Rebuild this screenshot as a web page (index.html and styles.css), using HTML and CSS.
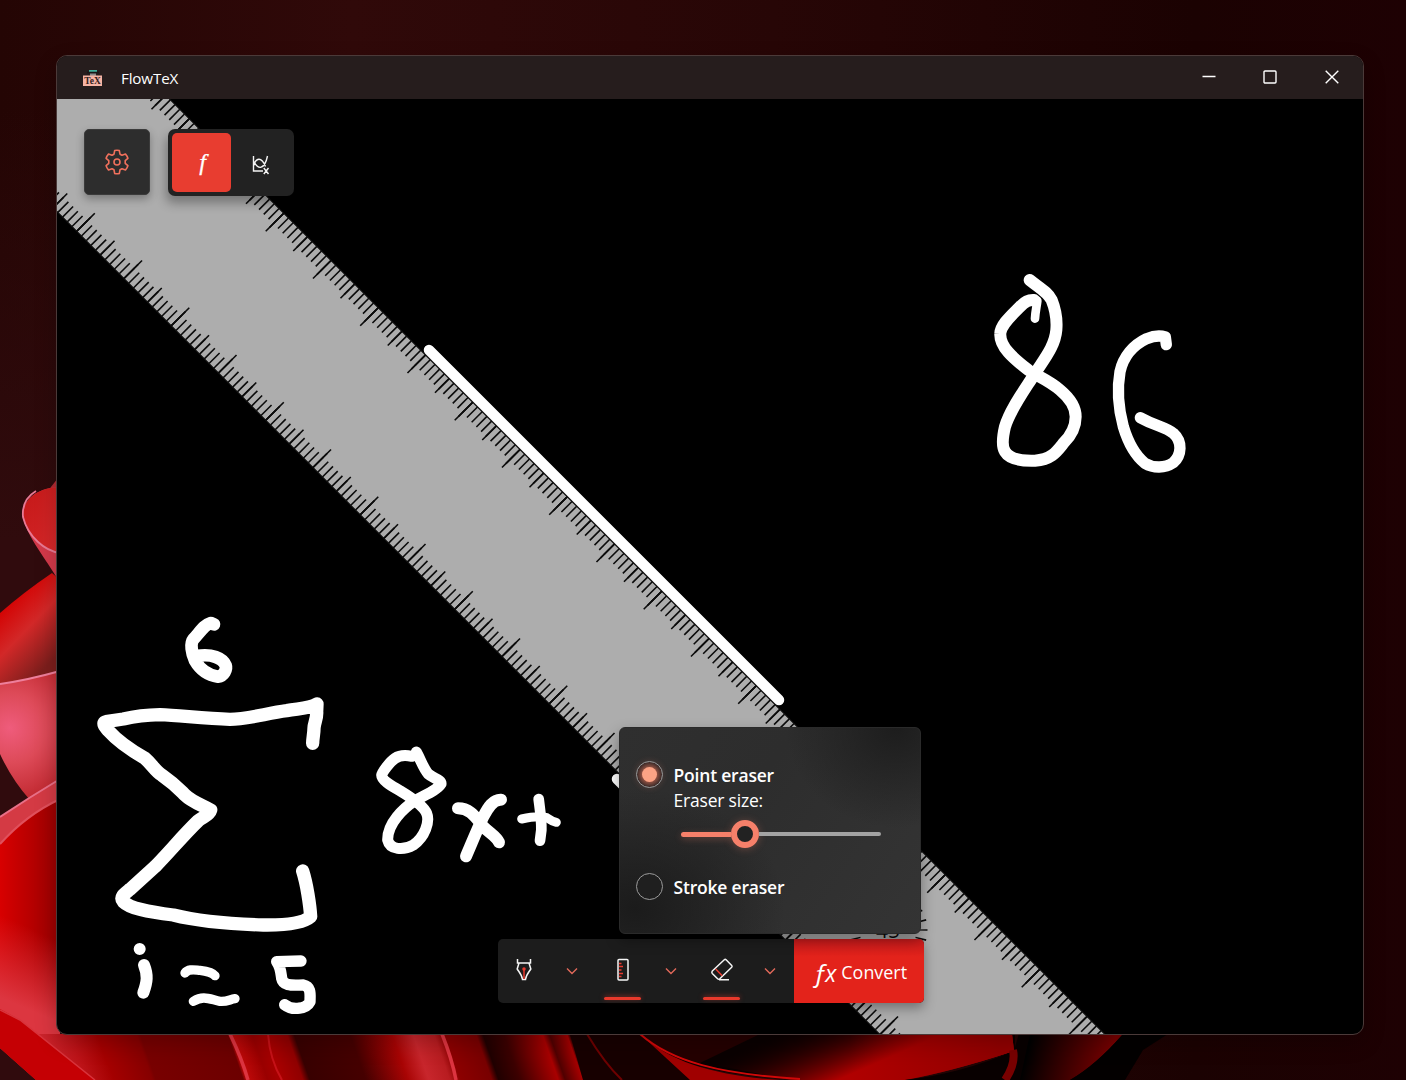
FILE: index.html
```html
<!DOCTYPE html>
<html lang="en">
<head>
<meta charset="utf-8">
<title>FlowTeX</title>
<link rel="stylesheet" href="styles.css">
</head>
<body>
<svg class="wallpaper" viewBox="0 0 1406 1080" aria-hidden="true">
  <defs>
    <linearGradient id="base" x1="0" y1="0" x2="1" y2="0"><stop offset="0" stop-color="#240504"/><stop offset=".25" stop-color="#300909"/><stop offset=".55" stop-color="#270606"/><stop offset=".85" stop-color="#1b0202"/><stop offset="1" stop-color="#1e0103"/></linearGradient>
    <linearGradient id="low" x1="0" y1="0" x2="0" y2="1"><stop offset=".1" stop-color="#300b0d" stop-opacity="0"/><stop offset=".5" stop-color="#300b0d"/></linearGradient>
    <linearGradient id="curl" x1="0" y1="0" x2="1" y2="1"><stop offset="0" stop-color="#c41717"/><stop offset="1" stop-color="#d82a2c"/></linearGradient>
    <linearGradient id="petalB" x1="10" y1="600" x2="62" y2="650" gradientUnits="userSpaceOnUse"><stop offset="0" stop-color="#d40202"/><stop offset=".45" stop-color="#d22828"/><stop offset="1" stop-color="#7c1e1c"/></linearGradient>
    <radialGradient id="petalC" cx="10" cy="728" r="70" gradientUnits="userSpaceOnUse"><stop offset="0" stop-color="#ef5c7c"/><stop offset=".5" stop-color="#dd4a58"/><stop offset="1" stop-color="#c42c34"/></radialGradient>
    <linearGradient id="petalD" x1="0" y1="0" x2="60" y2="0" gradientUnits="userSpaceOnUse"><stop offset="0" stop-color="#d80000"/><stop offset="1" stop-color="#980000"/></linearGradient>
    <linearGradient id="sheen" x1="36" y1="930" x2="6" y2="1000" gradientUnits="userSpaceOnUse"><stop offset="0" stop-color="#d9323c" stop-opacity="0"/><stop offset="1" stop-color="#dc3640"/></linearGradient>
    <linearGradient id="floor" x1="0" y1="1034" x2="624.400" y2="817" gradientUnits="userSpaceOnUse">
      <stop offset=".03" stop-color="#d4303a"/><stop offset=".1" stop-color="#bd1318"/><stop offset=".14" stop-color="#a40000"/><stop offset=".195" stop-color="#860000"/><stop offset=".2" stop-color="#780000"/><stop offset=".325" stop-color="#6c0000"/><stop offset=".33" stop-color="#c00a0a"/><stop offset=".36" stop-color="#9a0000"/><stop offset=".38" stop-color="#a80000"/><stop offset=".41" stop-color="#900000"/><stop offset=".42" stop-color="#380000"/><stop offset=".5" stop-color="#450000"/><stop offset=".56" stop-color="#a80404"/><stop offset=".59" stop-color="#c8262c"/><stop offset=".62" stop-color="#b81c20"/><stop offset=".635" stop-color="#8c0000"/><stop offset=".68" stop-color="#780000"/><stop offset=".69" stop-color="#200000"/><stop offset=".72" stop-color="#3c0000"/><stop offset=".775" stop-color="#a80000"/><stop offset=".785" stop-color="#500000"/><stop offset=".81" stop-color="#a40000"/><stop offset=".815" stop-color="#180000"/><stop offset="1" stop-color="#1a0000"/>
    </linearGradient>
    <linearGradient id="bowl" x1="740" y1="1030" x2="800" y2="1090" gradientUnits="userSpaceOnUse"><stop offset="0" stop-color="#040000"/><stop offset=".55" stop-color="#6c0000"/><stop offset="1" stop-color="#b00000"/></linearGradient>
    <linearGradient id="bowlR" x1="780" y1="1010" x2="815" y2="1090" gradientUnits="userSpaceOnUse"><stop offset=".25" stop-color="#1c0000" stop-opacity="0"/><stop offset="1" stop-color="#b00000"/></linearGradient>
    <linearGradient id="tip" x1="850" y1="0" x2="1000" y2="0" gradientUnits="userSpaceOnUse"><stop offset="0" stop-color="#900000" stop-opacity="0"/><stop offset="1" stop-color="#900000"/></linearGradient>
    <linearGradient id="leaf" x1="1030" y1="1040" x2="1110" y2="1060" gradientUnits="userSpaceOnUse"><stop offset="0" stop-color="#000"/><stop offset="1" stop-color="#780000"/></linearGradient>
  </defs>
  <rect width="1406" height="1080" fill="url(#base)"/>
  <rect width="120" height="1080" fill="url(#low)"/>
  <path d="M47 492 58 478V500z" fill="#b32a32"/>
  <path d="M60 487C36 488 22 500 23 517c4 20 22 40 37 66z" fill="#d3394a"/>
  <path d="M60 487C36 488 22 500 23 517c5 20 22 34 37 36z" fill="url(#curl)"/>
  <path d="M36 491C26 497 22 506 23 517c5 20 22 34 37 36" fill="none" stroke="#e87a95" stroke-width="1.800"/>
  <path d="M0 613Q24 592 52 573L60 580V690H0z" fill="url(#petalB)"/>
  <path d="M0 684Q28 680 60 671V800H30Q12 780 0 754z" fill="url(#petalC)"/>
  <path d="M0 684Q28 680 60 671" fill="none" stroke="#ee7f9c" stroke-width="2"/>
  <path d="M0 817Q30 797 60 779V1080H36L0 1048z" fill="#d43a44"/>
  <path d="M0 817Q30 797 60 779" fill="none" stroke="#e87088" stroke-width="2"/>
  <path d="M0 844Q26 815 60 799V1080H36L0 1048z" fill="url(#petalD)"/>
  <path d="M0 844Q26 815 60 799" fill="none" stroke="#e0505c" stroke-width="2"/>
  <path d="M0 900 60 920V1060L0 1010z" fill="url(#sheen)"/>
  <path d="M18 1034H640L700 1080H92z" fill="url(#floor)"/>
  <path d="M0 1009 20 1020 95 1080H36L0 1048z" fill="#c50004"/>
  <path d="M0 1010 20 1020 95 1080" fill="none" stroke="#d8333c" stroke-width="1.500"/>
  <path d="M230 1034q12 25 18 46M442 1034q10 25 14 46" fill="none" stroke="#dc3440" stroke-width="3.500"/>
  <path d="M268 1034q2 26 14 46" fill="none" stroke="#c61218" stroke-width="2"/>
  <path d="M570 1034h70c24 20 44 26 60 29v17H583z" fill="#170000"/>
  <path d="M587 1034q18 30 35 46" fill="none" stroke="#6e0000" stroke-width="2"/>
  <path d="M640 1034H1015V1052L905 1080H800C700 1074 665 1058 640 1034z" fill="#0a0000"/>
  <path d="M640 1034H760L700 1063C680 1058 662 1050 640 1034z" fill="#240000"/>
  <path d="M740 1034H1012L1014 1051Q950 1072 905 1080H790L705 1063z" fill="url(#bowlR)"/>
  <path d="M850 1034H1012L1014 1051Q950 1072 905 1080H850z" fill="url(#tip)"/>
  <path d="M640 1034C672 1064 720 1076 780 1080H690z" fill="#a00000"/>
  <path d="M640 1034C672 1062 720 1074 800 1079" fill="none" stroke="#d00808" stroke-width="2"/>
  <path d="M1014 1051Q960 1074 905 1080H1100L1165 1030H1020z" fill="#080000"/>
  <path d="M1013 1050q3 14-8 30" fill="none" stroke="#780000" stroke-width="8"/>
  <path d="M1030 1034H1123Q1096 1065 1070 1080H1020z" fill="url(#leaf)"/>
  <path d="M1123 1034Q1096 1065 1070 1080H1125L1143 1050 1168 1034z" fill="#030000"/>
</svg>

<main class="window">
  <header class="titlebar">
    <svg class="app-icon" viewBox="0 0 22 20">
      <rect x="7" y="2" width="8" height="2" fill="#3fae9a"/><path d="M5 4.500h12" stroke="#171717" stroke-width="1.500"/>
      <rect x="8" y="5.500" width="6" height="4" fill="#8a8a8a"/>
      <rect x="1" y="7.500" width="19" height="10.500" fill="#f6b4a4"/>
      <text x="10.500" y="16.300" text-anchor="middle" class="app-icon-text">TeX</text>
    </svg>
    <h1 class="title">FlowTeX</h1>
    <div class="captions">
      <svg viewBox="0 0 16 16"><path d="M1.500 7.500h13"/></svg>
      <svg viewBox="0 0 16 16"><rect x="2" y="2" width="12" height="12" rx="1"/></svg>
      <svg viewBox="0 0 16 16"><path d="M1.700 1.700 14.300 14.300M14.300 1.700 1.700 14.300"/></svg>
    </div>
  </header>

  <section class="canvas">
    <svg class="ink" viewBox="57 99 1306 935">
      <!-- ruler, drawn along its own axis -->
      <g transform="rotate(45)">
        <rect x="-100" y="-49.850" width="1800" height="159.100" fill="#adadad"/>
        <g stroke="#0c0c0c">
          <path d="M-100-49.850H1700M-100 109.250H1700" stroke-width="1"/>
          <g stroke-dasharray="1.600 5.082">
            <path d="M16.540-42.400H1700M16.540 101.800H1700" stroke-width="14.900"/>
          </g>
          <g stroke-dasharray="1.600 31.810">
            <path d="M16.540-39.850H1700M16.540 99.250H1700" stroke-width="20"/>
          </g>
          <g stroke-dasharray="1.600 65.220">
            <path d="M16.540-37.100H1700M16.540 96.500H1700" stroke-width="25.500"/>
          </g>
        </g>
      </g>
      <circle cx="888" cy="930" r="34" pathLength="240" fill="none" stroke="#0c0c0c" stroke-width="11" stroke-dasharray="1.700 8.300" stroke-dashoffset=".85"/>
      <text x="888" y="938" text-anchor="middle" class="angle">45</text>
      <path d="M429 350 779 700M617 779 672 834" class="stroke" stroke-width="10.500"/>

      <g class="stroke" transform="translate(960 250) scale(.33333)" stroke-width="36">
        <path d="M209 90C240 115 262 125 275 150 285 175 292 205 289 240 285 290 250 330 222 375 190 425 150 480 135 530 128 560 125 590 135 605 150 630 195 633 225 632 275 628 290 605 310 580 335 555 347 525 347 500 347 470 330 445 300 420 265 390 230 378 205 360 160 325 118 290 121 250 122 225 150 200 180 170 195 155 205 149 222 150"/>
        <path d="M232 152C230 170 226 185 225 206" stroke-width="26"/>
        <path d="M619 284 616 261C600 256 580 258 560 266 520 285 490 320 480 365 472 410 474 470 490 530 505 580 530 620 555 640 580 655 615 655 640 638 665 615 668 575 640 550 615 530 590 530 541 503" stroke-width="34"/>
      </g>
      <g class="stroke" transform="translate(80 600) scale(.33333)" stroke-width="36">
        <path d="M402 73 392 69C374 74 360 96 340 118 330 130 335 160 345 182 360 208 385 226 414 230 432 228 441 208 437 196 428 174 395 160 350 168" stroke-width="38"/>
        <path d="M698 430C698 415 702 400 702 385 702 370 712 355 710 335L711 312C690 325 660 325 620 332 560 340 500 358 450 358 370 356 300 346 240 344 190 345 160 350 130 357L78 365C65 368 75 380 85 392 110 420 160 455 195 475 215 492 225 512 245 525 285 553 295 565 315 585 335 605 365 615 392 630 388 645 370 650 355 662 310 705 265 760 225 800L150 868C135 880 118 890 130 905 150 925 200 935 280 945 360 965 450 972 550 975 620 976 670 970 692 950 690 915 680 850 668 813" stroke-width="40"/>
        <path d="M179 1047h.1M192 1095C204 1125 202 1145 190 1178"/>
        <path d="M315 1119C325 1105 345 1110 360 1111 380 1113 400 1120 405 1127M340 1204C370 1185 390 1198 420 1204 440 1206 450 1198 465 1196" stroke-width="28"/>
        <path d="M663 1083 590 1085C602 1100 603 1120 605 1135 610 1160 640 1155 670 1155 695 1160 690 1185 690 1205 680 1225 640 1234 614 1214" stroke-width="34"/>
      </g>
      <g class="stroke" transform="translate(350 730) scale(.33333)" stroke-width="33">
        <path d="M199 66C215 95 220 115 235 132 250 145 275 150 273 162 262 180 225 195 195 212 160 235 112 280 113 330 120 360 160 362 190 345 225 320 240 275 230 250 220 225 180 200 150 182 120 165 95 150 95 135 95 128 120 95 135 85 150 75 165 75 185 79"/>
        <path d="M324 235C360 235 375 260 400 290 420 310 440 320 447 337M453 209C430 208 415 230 400 260 385 290 365 340 348 379" stroke-width="36"/>
        <path d="M515 267C545 260 570 257 590 263 600 270 610 275 619 277" stroke-width="27"/><path d="M566 207C570 240 575 270 574 300L570 332" stroke-width="32"/>
      </g>
    </svg>

    <div class="overlay">
      <nav class="top-tools">
        <button class="settings" aria-label="Settings">
          <svg width="26" height="26" viewBox="0 0 26 26" fill="none" stroke="#f0705c" stroke-width="1.600" stroke-linejoin="round"><circle cx="13" cy="13" r="3"/><path d="M10.700 1.500Q13 .9 15.300 1.500L16 5.200 18 6.300 21.500 5.100Q23.200 7 23.900 9.300L21.200 11.700V14.300L23.900 16.700Q23.200 19 21.500 20.900L18 19.700 16 20.800 15.300 24.500Q13 25.100 10.700 24.500L10 20.800 8 19.700 4.500 20.900Q2.800 19 2.100 16.700L4.800 14.300V11.700L2.100 9.300Q2.800 7 4.500 5.100L8 6.300 10 5.200z"/></svg>
        </button>
        <div class="modes">
          <button class="mode selected"><span>f</span></button>
          <button class="mode" aria-label="Graph">
            <svg width="18" height="20" viewBox="0 0 18 20" fill="none" stroke="#f4f4f4" stroke-width="1.400"><path d="M1.500 1V16H11M1.500 11C4 2.500 9.500 1.500 13.500 11.500M2 6.500C6 15 12.500 15 15.500 1M11.800 13 16.500 19M16.500 13 11.800 19"/></svg>
          </button>
        </div>
      </nav>

      <div class="dock">
        <div class="tools">
          <div class="tool">
            <button class="pick" aria-label="Pen"><svg width="20" height="26" viewBox="0 0 20 26" fill="none" stroke="#f5f5f5" stroke-width="1.500"><path d="M3.500 2V6H16.500V2M5 6 3.200 12C5 15 8 18 8.500 22.500H11.500C12 18 15 15 16.800 12L15 6"/><path d="M10 12.500V22" stroke="#ec3a2e" stroke-width="1.500"/><circle cx="10" cy="12" r="1" fill="#ec3a2e" stroke="#ec3a2e"/></svg></button>
            <button class="more" aria-label="Pen options"><svg width="12" height="8" viewBox="0 0 12 8"><path d="M1 1.500 6 6.500 11 1.500"/></svg></button>
          </div>
          <div class="tool active">
            <button class="pick" aria-label="Ruler"><svg width="20" height="26" viewBox="0 0 20 26" fill="none" stroke="#f5f5f5" stroke-width="1.500"><rect x="5" y="2.500" width="10" height="20.500" rx="1"/><path d="M6 6.500h2.500M6 9.500h4M6 13h2.500M6 16.500h4M6 19.500h2.500" stroke="#ec3a2e" stroke-width="1.300"/></svg></button>
            <button class="more" aria-label="Ruler options"><svg width="12" height="8" viewBox="0 0 12 8"><path d="M1 1.500 6 6.500 11 1.500"/></svg></button>
          </div>
          <div class="tool active">
            <button class="pick" aria-label="Eraser"><svg width="24" height="26" viewBox="0 0 24 26" fill="none" stroke="#f5f5f5" stroke-width="1.500" stroke-linejoin="round"><path d="M2.300 14 14.300 2.800Q15.200 2 16.100 2.800L21.700 8.500Q22.500 9.300 21.700 10.200L9.800 21.800Q8.700 22.800 7.600 21.800L2.300 16.500Q1.300 15.200 2.300 14zM9 22.800H19"/><path d="M5.700 12 12.200 18.700" stroke="#ec3a2e"/></svg></button>
            <button class="more" aria-label="Eraser options"><svg width="12" height="8" viewBox="0 0 12 8"><path d="M1 1.500 6 6.500 11 1.500"/></svg></button>
          </div>
        </div>
        <button class="convert"><span class="fx"><i>ƒ</i><b>x</b></span><span>Convert</span></button>

        <div class="flyout">
          <div class="option">
            <span class="radio checked"></span>
            <div class="option-body">
              <strong>Point eraser</strong>
              <span class="label">Eraser size:</span>
              <div class="slider"><span class="fill"></span><span class="thumb"></span><span class="rest"></span></div>
            </div>
          </div>
          <div class="option">
            <span class="radio"></span>
            <div class="option-body"><strong>Stroke eraser</strong></div>
          </div>
        </div>
      </div>
    </div>
  </section>
</main>
</body>
</html>
```
FILE: styles.css
```css
* { box-sizing: border-box; }

body {
  margin: 0;
  width: 1406px;
  height: 1080px;
  overflow: hidden;
  padding: 55px 42px 45px 56px;
  background: #240504;
  color: #fff;
  font-family: "Open Sans", "Noto Sans", sans-serif;
}

button {
  margin: 0;
  padding: 0;
  border: 0;
  background: none;
  color: inherit;
  font: inherit;
  display: flex;
  align-items: center;
  justify-content: center;
}

.wallpaper { position: absolute; inset: 0; width: 1406px; height: 1080px; z-index: -1; }

.window {
  display: flex;
  flex-direction: column;
  height: 980px;
  border: 1px solid #4b3a39;
  border-radius: 11px;
  overflow: hidden;
  background: #000;
  box-shadow: 0 8px 22px rgba(0, 0, 0, .2);
}

.titlebar {
  display: flex;
  align-items: center;
  flex: 0 0 43px;
  padding: 0 23.5px 1px 25px;
  background: #261d1d;
}
.app-icon { width: 22px; height: 20px; margin-top: 2px; }
.app-icon-text { font: bold 9.5px "Liberation Serif", serif; fill: #33201d; }
.title { margin: 1px 0 0 17px; font-size: 15.2px; font-weight: 400; letter-spacing: -.15px; }
.captions { display: flex; gap: 45.5px; margin-left: auto; }
.captions svg { width: 16px; height: 16px; fill: none; stroke: #fff; stroke-width: 1.4; }

.canvas { display: grid; flex: 1; min-height: 0; }
.ink, .overlay { grid-area: 1 / 1; }
.ink { width: 1306px; height: 935px; }
.stroke { fill: none; stroke: #fff; stroke-linecap: round; stroke-linejoin: round; }
.angle { font: 21px "Open Sans", sans-serif; fill: #0c0c0c; }

.overlay {
  display: flex;
  flex-direction: column;
  justify-content: space-between;
  height: 935px;
  padding: 30px 27px 31px;
}
.top-tools { display: flex; gap: 18px; }
.settings {
  width: 66px;
  height: 66px;
  border: 1px solid #3b3b3b;
  border-radius: 5px;
  background: #2d2d2d;
  box-shadow: 0 4px 9px rgba(0, 0, 0, .3);
}
.modes {
  display: flex;
  width: 126px;
  height: 67px;
  padding: 4px;
  border-radius: 7px;
  background: #222;
  box-shadow: -2px 7px 11px rgba(0, 0, 0, .32);
}
.mode { width: 59px; height: 59px; border-radius: 5px; }
.mode svg { margin-top: 4px; }
.selected { background: #e83d30; font: italic 24px "Liberation Serif", serif; -webkit-text-stroke: .3px #fff; padding-left: 2px; }

.dock {
  position: relative;
  display: flex;
  align-self: center;
  width: 426px;
  height: 64px;
  margin-left: 1px;
  border-radius: 5px;
  background: #1c1c1c;
  box-shadow: 0 5px 12px rgba(0, 0, 0, .35);
}
.tools { display: flex; width: 296px; }
.tool { display: flex; flex: 0 0 99px; }
.pick { position: relative; width: 52px; height: 64px; padding-bottom: 3px; }
.active .pick::after {
  content: "";
  position: absolute;
  left: 7.5px;
  bottom: 3px;
  width: 37px;
  height: 3px;
  border-radius: 2px;
  background: #e8392b;
  box-shadow: 0 -1px 5px rgba(232, 57, 43, .5);
}
.more { width: 44px; height: 64px; }
.more svg { fill: none; stroke: #e2695a; stroke-width: 1.4; }
.convert {
  width: 130px;
  gap: 5px;
  padding: 2px 0 0 3px;
  border-radius: 0 5px 5px 0;
  background: linear-gradient(#c41a1b, #e3231b 28%);
  font-size: 17.9px;
}
.fx { display: flex; align-items: baseline; font-style: italic; line-height: 26px; }
.fx i { font-size: 26px; }
.fx b { font-size: 23px; font-weight: 500; margin-left: -2px; }

.flyout {
  position: absolute;
  left: 121px;
  bottom: 69px;
  width: 302px;
  height: 207px;
  padding: 33px 16px;
  border: 1px solid #2a2a2a;
  border-radius: 6px;
  background:
    radial-gradient(ellipse 110px 100px at 92% 0, #1d1d1d, rgba(29, 29, 29, 0)),
    radial-gradient(ellipse 150px 120px at 5% 88%, #1b1b1b, rgba(29, 29, 29, 0)),
    linear-gradient(125deg, #2f2f2f, #2d2d2d 40%, #343434);
  box-shadow: 0 6px 14px rgba(0, 0, 0, .35);
}
.option { display: flex; gap: 11px; height: 112px; }
.radio {
  display: flex;
  flex: 0 0 27px;
  height: 27px;
  align-items: center;
  justify-content: center;
  border: 1.5px solid #9b9b9b;
  border-radius: 50%;
  background: #1f1f1f;
}
.checked { background: radial-gradient(#a35a48 35%, #3a2a28 70%); box-shadow: 0 0 6px rgba(250, 140, 115, .18); }
.checked::after { content: ""; width: 15px; height: 15px; border-radius: 50%; background: #fca385; }
.option-body { display: flex; flex-direction: column; font-size: 17.5px; line-height: 26px; white-space: nowrap; }
.option-body strong { font-weight: 600; letter-spacing: -.2px; margin-top: 1px; }
.label { letter-spacing: -.2px; margin-top: -1px; }
.slider { display: flex; align-items: center; width: 200px; margin: 7px 0 0 7px; }
.fill { width: 50px; height: 5px; border-radius: 3px 0 0 3px; background: #f6806a; box-shadow: 0 2px 7px rgba(246, 128, 106, .3); }
.thumb { width: 28px; height: 28px; border: 6px solid #f6806a; border-radius: 50%; background: #222; box-shadow: 0 1px 8px rgba(246, 128, 106, .3); }
.rest { flex: 1; height: 4px; border-radius: 0 2px 2px 0; background: #a3a3a3; }
```
